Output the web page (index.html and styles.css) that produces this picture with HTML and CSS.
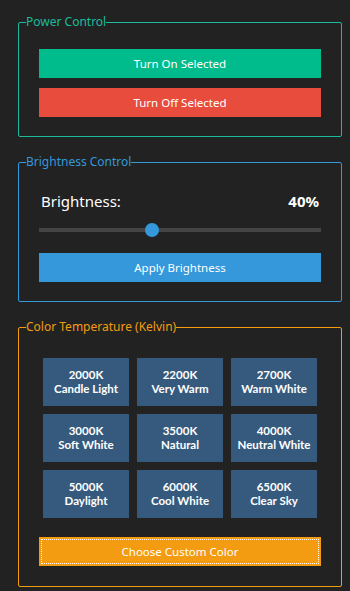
FILE: index.html
```html
<!DOCTYPE html>
<html>
<head>
  <title>Light Control</title>
  <link rel="stylesheet" href="styles.css">
</head>
<body>
  <fieldset class="group power">
    <legend>Power Control</legend>
    <div class="stack">
      <button class="btn btn-on">Turn On Selected</button>
      <button class="btn btn-off">Turn Off Selected</button>
    </div>
  </fieldset>

  <fieldset class="group brightness">
    <legend>Brightness Control</legend>
    <div class="stack">
      <div class="bright-row">
        <span class="bright-label">Brightness:</span>
        <span class="bright-value">40%</span>
      </div>
      <div class="slider">
        <div class="slider-track"></div>
        <div class="slider-thumb" style="left: 40%"></div>
      </div>
      <button class="btn btn-apply">Apply Brightness</button>
    </div>
  </fieldset>

  <fieldset class="group temperature">
    <legend>Color Temperature (Kelvin)</legend>
    <div class="stack">
      <div class="temps">
        <button class="temp"><span>2000K</span><span>Candle Light</span></button>
        <button class="temp"><span>2200K</span><span>Very Warm</span></button>
        <button class="temp"><span>2700K</span><span>Warm White</span></button>
        <button class="temp"><span>3000K</span><span>Soft White</span></button>
        <button class="temp"><span>3500K</span><span>Natural</span></button>
        <button class="temp"><span>4000K</span><span>Neutral White</span></button>
        <button class="temp"><span>5000K</span><span>Daylight</span></button>
        <button class="temp"><span>6000K</span><span>Cool White</span></button>
        <button class="temp"><span>6500K</span><span>Clear Sky</span></button>
      </div>
      <button class="btn btn-custom">Choose Custom Color</button>
    </div>
  </fieldset>
</body>
</html>
```

FILE: styles.css
```css
body {
  margin: 0;
  padding: 14px 8px 0 18px;
  background: #222222;
  color: #fff;
  font-family: 'Noto Sans', sans-serif;
}

.group {
  margin: 0 0 17px;
  padding: 0;
  min-inline-size: 0;
  border: 1px solid;
  border-radius: 2px;
}

.group legend {
  padding: 0;
  margin-left: 7px;
  font-size: 12px;
  line-height: 16px;
}

.power { border-color: #1abc9c; color: #1abc9c; }
.brightness { border-color: #3498db; color: #3498db; }
.temperature { border-color: #f39c12; color: #f39c12; }

.stack {
  display: flex;
  flex-direction: column;
  gap: 10px;
  padding: 19px 20px;
}

.temperature .stack {
  padding-top: 23px;
  padding-bottom: 20px;
}

.btn {
  display: block;
  width: 100%;
  height: 29px;
  border: none;
  border-radius: 0;
  color: #fff;
  font-family: 'Noto Sans', sans-serif;
  font-size: 11.5px;
  cursor: pointer;
}

.btn-on { background: #00bb8c; }
.btn-off { background: #e74c3c; }
.btn-apply { background: #3498db; }

.btn-custom {
  background: #f39c12;
  outline: 1px dotted #fff;
  outline-offset: -3px;
}

.bright-row {
  display: flex;
  justify-content: space-between;
  align-items: center;
  padding: 0 2px;
  height: 24px;
  color: #fff;
}

.bright-label {
  font-size: 15px;
}

.bright-value {
  font-size: 15px;
  font-weight: bold;
}

.slider {
  position: relative;
  height: 14px;
  margin: 0 0 6px;
}

.slider-track {
  position: absolute;
  left: 0;
  right: 0;
  top: 5px;
  height: 4px;
  background: #444444;
}

.slider-thumb {
  position: absolute;
  top: 0;
  width: 14px;
  height: 14px;
  margin-left: -7px;
  border-radius: 50%;
  background: #3498db;
}

.temps {
  display: grid;
  grid-template-columns: repeat(3, 86px);
  grid-auto-rows: 48px;
  gap: 8px;
  padding: 0 4px;
  margin-bottom: 9px;
}

.temp {
  display: flex;
  flex-direction: column;
  align-items: center;
  justify-content: center;
  border: none;
  background: #365a7e;
  color: #fff;
  font-family: Lato, sans-serif;
  font-size: 11.5px;
  font-weight: bold;
  line-height: 14px;
  padding: 0;
  cursor: pointer;
}
```
